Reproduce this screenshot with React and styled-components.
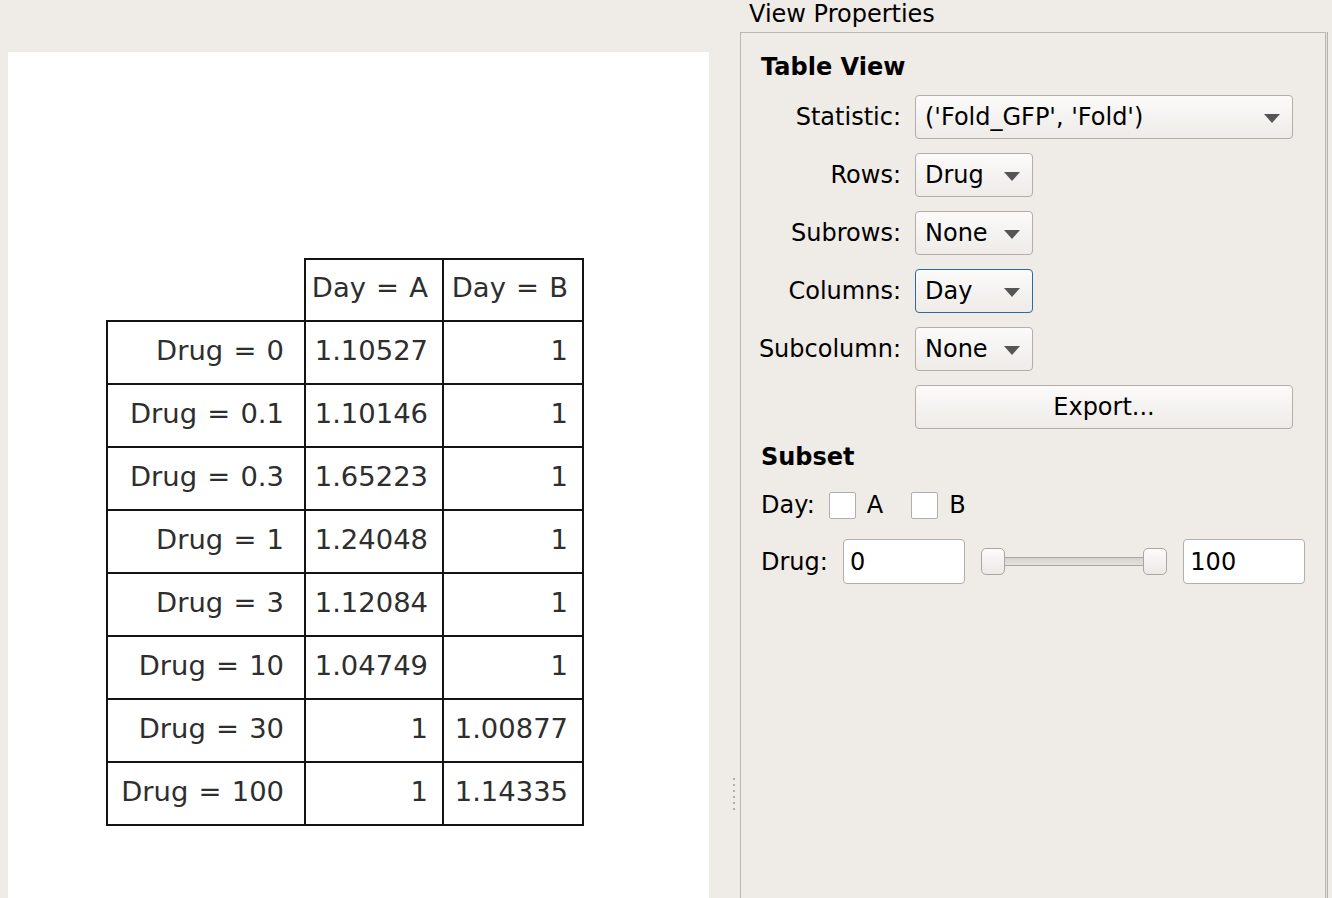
import React from 'react';
import styled, { createGlobalStyle } from 'styled-components';

const GlobalStyle = createGlobalStyle`
  html, body {
    margin: 0;
    padding: 0;
    background: #efebe7;
    font-family: "DejaVu Sans", "Noto Sans", sans-serif;
    color: #000;
  }
  * { box-sizing: border-box; }
`;

const Page = styled.div`
  display: flex;
  width: 1332px;
  height: 898px;
  overflow: hidden;
  background: #efebe7;
`;

const LeftPane = styled.div`
  flex: none;
  width: 728px;
  padding: 52px 0 0 8px;
  display: flex;
`;

const Canvas = styled.div`
  width: 701px;
  height: 100%;
  background: #fff;
  padding: 206px 0 0 98px;
`;

const Grid = styled.table`
  border-collapse: collapse;
  table-layout: fixed;
  font-size: 27.4px;
  word-spacing: 1.5px;
  color: #2e2e2e;
`;

const Cell = styled.td`
  border: 2px solid #141414;
  height: ${(p) => (p.$head ? 62 : 63)}px;
  padding: 0 ${(p) => (p.$label ? 20 : 14)}px 5px 0;
  text-align: right;
  white-space: nowrap;
  width: ${(p) => p.$w}px;
  ${(p) => p.$empty && 'border: none;'}
`;

const Splitter = styled.div`
  flex: none;
  width: 12px;
  display: flex;
  flex-direction: column;
  align-items: center;
  justify-content: flex-start;
  padding-top: 778px;
  gap: 4px;
`;

const Dot = styled.span`
  width: 2px;
  height: 2px;
  background: #b3aea9;
`;

const Dock = styled.div`
  flex: 1;
  min-width: 0;
  display: flex;
  flex-direction: column;
  padding-right: 6px;
`;

const DockTitle = styled.div`
  height: 32px;
  padding: 0 0 0 9px;
  font-size: 24px;
  line-height: 28px;
`;

const Frame = styled.div`
  flex: 1;
  border: 1px solid #bcb7b2;
  border-bottom: none;
  box-shadow: 1px 0 0 #e2deda, 2px 0 0 #b7b2ad;
  padding: 20px 20px 0 20px;
  display: flex;
  flex-direction: column;
`;

const SectionTitle = styled.div`
  font-size: 24px;
  font-weight: bold;
  line-height: 28px;
  margin: ${(p) => (p.$top ? '14px' : '0')} 0 ${(p) => p.$bottom}px 0;
`;

const Form = styled.div`
  display: grid;
  grid-template-columns: 140px auto;
  column-gap: 14px;
  row-gap: 14px;
  align-items: center;
  justify-items: start;
`;

const Label = styled.span`
  font-size: 24px;
  justify-self: end;
  white-space: nowrap;
`;

const Combo = styled.div`
  width: ${(p) => p.$w}px;
  height: 44px;
  border: 1px solid ${(p) => (p.$focus ? '#30699c' : '#b3aea9')};
  border-radius: 4px;
  background: linear-gradient(#fcfbfa, #eeebe8);
  display: flex;
  align-items: center;
  justify-content: space-between;
  padding: 0 12px 0 9px;
  font-size: 24px;
`;

const Arrow = styled.span`
  width: 0;
  height: 0;
  border-left: 8px solid transparent;
  border-right: 8px solid transparent;
  border-top: 9px solid #555;
  margin-top: 2px;
`;

const Button = styled.div`
  grid-column: 2;
  width: 378px;
  height: 44px;
  border: 1px solid #b3aea9;
  border-radius: 4px;
  background: linear-gradient(#fcfbfa, #eeebe8);
  display: flex;
  align-items: center;
  justify-content: center;
  font-size: 24px;
`;

const Row = styled.div`
  display: flex;
  align-items: center;
  height: ${(p) => p.$h}px;
  margin-top: ${(p) => p.$mt}px;
  font-size: 24px;
`;

const CheckItem = styled.label`
  display: flex;
  align-items: center;
  gap: 11px;
  margin-left: ${(p) => p.$ml}px;
`;

const Box = styled.span`
  width: 27px;
  height: 27px;
  background: #fff;
  border: 1px solid #b3aea9;
  border-radius: 2px;
`;

const Input = styled.div`
  width: 123px;
  height: 45px;
  background: #fff;
  border: 1px solid #b3aea9;
  border-radius: 4px;
  display: flex;
  align-items: center;
  padding-left: 6px;
  margin-left: ${(p) => p.$ml}px;
`;

const Slider = styled.div`
  width: 189px;
  margin-left: 16px;
  display: flex;
  align-items: center;
`;

const Handle = styled.span`
  width: 24px;
  height: 27px;
  border: 1px solid #aaa5a0;
  border-radius: 5px;
  background: linear-gradient(#fdfcfb, #ebe8e5);
  flex: none;
`;

const Groove = styled.span`
  flex: 1;
  height: 9px;
  border: 1px solid #aaa5a0;
  border-left: none;
  border-right: none;
  background: linear-gradient(#d6d2ce, #e4e1dd);
`;

const rows = [
  ['Drug = 0', '1.10527', '1'],
  ['Drug = 0.1', '1.10146', '1'],
  ['Drug = 0.3', '1.65223', '1'],
  ['Drug = 1', '1.24048', '1'],
  ['Drug = 3', '1.12084', '1'],
  ['Drug = 10', '1.04749', '1'],
  ['Drug = 30', '1', '1.00877'],
  ['Drug = 100', '1', '1.14335'],
];

const fields = [
  ['Statistic:', "('Fold_GFP', 'Fold')", 378],
  ['Rows:', 'Drug', 118],
  ['Subrows:', 'None', 118],
  ['Columns:', 'Day', 118, true],
  ['Subcolumn:', 'None', 118],
];

export default function App() {
  return (
    <Page>
      <GlobalStyle />
      <LeftPane>
        <Canvas>
          <Grid>
            <tbody>
              <tr>
                <Cell $empty $head $w={198} />
                <Cell $head $w={138}>Day = A</Cell>
                <Cell $head $w={140}>Day = B</Cell>
              </tr>
              {rows.map(([label, a, b]) => (
                <tr key={label}>
                  <Cell $label>{label}</Cell>
                  <Cell>{a}</Cell>
                  <Cell>{b}</Cell>
                </tr>
              ))}
            </tbody>
          </Grid>
        </Canvas>
      </LeftPane>
      <Splitter>
        {[0, 1, 2, 3, 4, 5].map((i) => <Dot key={i} />)}
      </Splitter>
      <Dock>
        <DockTitle>View Properties</DockTitle>
        <Frame>
          <SectionTitle $bottom={14}>Table View</SectionTitle>
          <Form>
            {fields.map(([label, value, w, focus]) => (
              <React.Fragment key={label}>
                <Label>{label}</Label>
                <Combo $w={w} $focus={focus}>
                  <span>{value}</span>
                  <Arrow />
                </Combo>
              </React.Fragment>
            ))}
            <Button>Export...</Button>
          </Form>
          <SectionTitle $top $bottom={0}>Subset</SectionTitle>
          <Row $h={30} $mt={19}>
            <span>Day:</span>
            <CheckItem $ml={14}><Box />A</CheckItem>
            <CheckItem $ml={28}><Box />B</CheckItem>
          </Row>
          <Row $h={45} $mt={19}>
            <span>Drug:</span>
            <Input $ml={15}>0</Input>
            <Slider>
              <Handle />
              <Groove />
              <Handle />
            </Slider>
            <Input $ml={16}>100</Input>
          </Row>
        </Frame>
      </Dock>
    </Page>
  );
}
